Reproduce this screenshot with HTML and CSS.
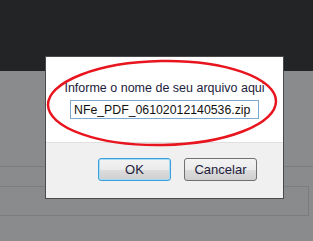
FILE: index.html
```html
<!DOCTYPE html>
<html lang="pt">

<head>
  <meta charset="UTF-8">
  <title>Download</title>
  <link rel="stylesheet" href="styles.css">
</head>

<body>
  <header class="topbar"></header>

  <main class="content">
    <div class="rule"></div>
    <div class="panel"></div>
  </main>

  <!-- caixa de dialogo -->
  <div class="dialog">
    <div class="dialog-body">
      <label for="filename">Informe o nome de seu arquivo aqui</label>
      <input type="text" id="filename" value="NFe_PDF_06102012140536.zip">
    </div>
    <div class="dialog-buttons">
      <button type="button" class="btn btn-ok">OK</button>
      <button type="button" class="btn">Cancelar</button>
    </div>
  </div>

  <svg class="mark" width="232" height="88" viewBox="0 0 232 88">
    <ellipse cx="116" cy="44" rx="114" ry="42" fill="none" stroke="#e8141e" stroke-width="2.5" transform="rotate(-1 116 44)" />
  </svg>
</body>

</html>
```

FILE: styles.css
```css
body {
  margin: 0;
  padding: 0;
  background-color: #8a8b8c;
  font-family: "Liberation Sans", Arial, sans-serif;
  height: 241px;
  overflow: hidden;
}

.topbar {
  height: 71px;
  background-color: #232426;
}

.content {
  padding-top: 95px;
}

.rule {
  height: 1px;
  background-color: #7b7c7d;
}

.panel {
  margin-top: 19px;
  margin-left: -2px;
  width: 309px;
  height: 28px;
  border: 1px solid #7b7c7d;
}

.dialog {
  position: absolute;
  left: 45px;
  top: 56px;
  width: 237px;
  height: 141px;
  border: 1px solid #4a4a4a;
  background-color: #f0f0f0;
}

.dialog-body {
  height: 85px;
  background-color: #fff;
  border-bottom: 1px solid #dfdfdf;
  display: flex;
  flex-direction: column;
  align-items: center;
}

.dialog-body label {
  margin-top: 24px;
  font-size: 12.5px;
  color: #1c1c3c;
  line-height: 15px;
}

.dialog-body input {
  margin-top: 4px;
  width: 189px;
  height: 19px;
  box-sizing: border-box;
  border: 1px solid #7fa8cf;
  padding: 0 3px;
  font-family: "Liberation Sans", Arial, sans-serif;
  font-size: 12.3px;
  color: #111;
}

.dialog-buttons {
  display: flex;
  justify-content: flex-end;
  gap: 13px;
  padding: 15px 26px 0 0;
}

.btn {
  width: 73px;
  height: 23px;
  border: 1px solid #707070;
  border-radius: 3px;
  background: linear-gradient(#f3f3f3, #ebebeb 50%, #dddddd 51%, #cfcfcf);
  font-family: "Liberation Sans", Arial, sans-serif;
  font-size: 13px;
  color: #1c1c3c;
  padding: 0;
}

.btn-ok {
  border-color: #3c9fd8;
  box-shadow: inset 0 0 0 1px #a8dcf6;
}

.mark {
  position: absolute;
  left: 46px;
  top: 59px;
}
```
